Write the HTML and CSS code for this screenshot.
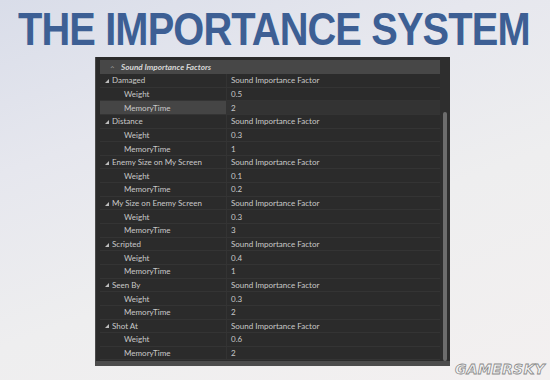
FILE: index.html
```html
<!DOCTYPE html>
<html lang="en">
<head>
  <meta charset="UTF-8">
  <title>The Importance System</title>
  <link rel="stylesheet" href="styles.css">
</head>
<body>
  <h1 class="slide-title"><span class="title-text">THE IMPORTANCE SYSTEM</span></h1>

  <div class="grid-panel">
    <div class="grid-body">
      <div class="grid-header">
        <span class="chevron">&#8963;</span>
        <span class="header-text">Sound Importance Factors</span>
      </div>

      <div class="grid-rows">
        <div class="row group"><span class="label"><i class="tri"></i>Damaged</span><span class="value">Sound Importance Factor</span></div>
        <div class="row"><span class="label child">Weight</span><span class="value">0.5</span></div>
        <div class="row selected"><span class="label child">MemoryTime</span><span class="value">2</span></div>

        <div class="row group"><span class="label"><i class="tri"></i>Distance</span><span class="value">Sound Importance Factor</span></div>
        <div class="row"><span class="label child">Weight</span><span class="value">0.3</span></div>
        <div class="row"><span class="label child">MemoryTime</span><span class="value">1</span></div>

        <div class="row group"><span class="label"><i class="tri"></i>Enemy Size on My Screen</span><span class="value">Sound Importance Factor</span></div>
        <div class="row"><span class="label child">Weight</span><span class="value">0.1</span></div>
        <div class="row"><span class="label child">MemoryTime</span><span class="value">0.2</span></div>

        <div class="row group"><span class="label"><i class="tri"></i>My Size on Enemy Screen</span><span class="value">Sound Importance Factor</span></div>
        <div class="row"><span class="label child">Weight</span><span class="value">0.3</span></div>
        <div class="row"><span class="label child">MemoryTime</span><span class="value">3</span></div>

        <div class="row group"><span class="label"><i class="tri"></i>Scripted</span><span class="value">Sound Importance Factor</span></div>
        <div class="row"><span class="label child">Weight</span><span class="value">0.4</span></div>
        <div class="row"><span class="label child">MemoryTime</span><span class="value">1</span></div>

        <div class="row group"><span class="label"><i class="tri"></i>Seen By</span><span class="value">Sound Importance Factor</span></div>
        <div class="row"><span class="label child">Weight</span><span class="value">0.3</span></div>
        <div class="row"><span class="label child">MemoryTime</span><span class="value">2</span></div>

        <div class="row group"><span class="label"><i class="tri"></i>Shot At</span><span class="value">Sound Importance Factor</span></div>
        <div class="row"><span class="label child">Weight</span><span class="value">0.6</span></div>
        <div class="row"><span class="label child">MemoryTime</span><span class="value">2</span></div>
      </div>
    </div>

    <div class="scrollbar">
      <div class="scroll-thumb"></div>
    </div>
  </div>

  <div class="watermark">GAMERSKY</div>
</body>
</html>
```

FILE: styles.css
```css
/* Slide */
body {
  margin: 0;
  width: 550px;
  height: 380px;
  overflow: hidden;
  position: relative;
  font-family: Lato, "Open Sans", sans-serif;
  background: linear-gradient(160deg, #d9dde9 0%, #e6e7ee 30%, #eeeeef 60%, #f3f0f0 100%);
}

.slide-title {
  margin: 0;
  padding: 6px 0 0 18px;
  height: 51px;
  overflow: hidden;
  white-space: nowrap;
  font-family: "Liberation Sans", Arial, sans-serif;
  font-weight: bold;
  font-size: 46px;
  line-height: 46px;
  letter-spacing: -1px;
  color: #3d5f94;
}

.title-text {
  display: inline-block;
  transform: scaleX(0.865);
  transform-origin: 0 0;
}

/* Property grid */
.grid-panel {
  margin-left: 95px;
  width: 355px;
  height: 309px;
  box-sizing: border-box;
  background: #2b2b2b;
  border-left: 1px solid #4a4a4a;
  border-bottom: 5px solid #4c4c4c;
  display: flex;
}

.grid-body {
  flex: 1;
  padding: 3px 0 0 4px;
  display: flex;
  flex-direction: column;
}

.grid-header {
  height: 14px;
  background: #474747;
  display: flex;
  align-items: center;
  gap: 5px;
  padding-left: 9px;
  color: #d6d6d6;
}

.chevron {
  font-size: 8px;
  color: #9a9a9a;
  line-height: 8px;
  padding-top: 3px;
}

.header-text {
  font-style: italic;
  font-weight: bold;
  font-size: 8.2px;
}

.row {
  height: 13.65px;
  display: flex;
  font-size: 8px;
  color: #c9c9c9;
  border-bottom: 1px solid #343434;
  box-sizing: border-box;
}

.label {
  width: 127px;
  box-sizing: border-box;
  padding-left: 5px;
  display: flex;
  align-items: center;
  gap: 3px;
  border-right: 1px solid #333;
}

.label.child {
  padding-left: 24px;
}

.value {
  flex: 1;
  padding-left: 4px;
  display: flex;
  align-items: center;
}

.row.selected .label {
  background: #454545;
}

.row.selected .value {
  background: #333;
}

.tri {
  width: 0;
  height: 0;
  border-left: 4px solid transparent;
  border-bottom: 4px solid #bdbdbd;
  margin-top: 1px;
}

/* Scrollbar */
.scrollbar {
  width: 10px;
  background: #2e2e2e;
  display: flex;
  justify-content: center;
  padding-top: 55px;
  box-sizing: border-box;
}

.scroll-thumb {
  width: 4px;
  background: #6d6d6d;
  border-radius: 2px;
  height: 100%;
}

/* Watermark */
.watermark {
  position: absolute;
  right: 5px;
  bottom: 3px;
  font-family: "DejaVu Sans", sans-serif;
  font-weight: bold;
  font-style: italic;
  font-size: 14px;
  letter-spacing: 0.3px;
  color: #f4f4f4;
  -webkit-text-stroke: 0.8px #8a8a8a;
}
```
